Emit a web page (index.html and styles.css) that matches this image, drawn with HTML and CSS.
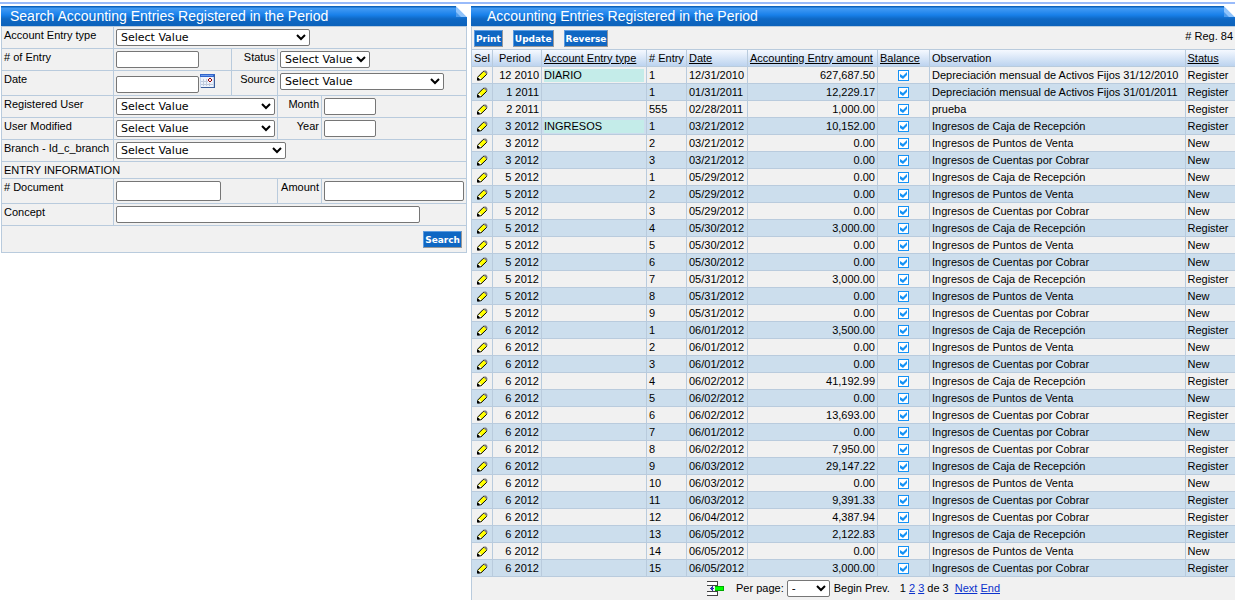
FILE: index.html
```
<!DOCTYPE html>
<html lang="en">
<head>
<meta charset="utf-8">
<title>Accounting Entries Registered in the Period</title>
<link rel="stylesheet" href="styles.css">
</head>
<body>
<svg width="0" height="0" class="defs" aria-hidden="true">
  <symbol id="pencil" viewBox="0 0 11 11">
    <path fill="#ff0" stroke="#000" d="M.8 9.8V7L6.2 1.5H7.5L9.5 3.5V4.5L4 9.8Z"/>
    <path fill="#fff" d="M1.3 9.3V7.2L2.2 6.6L4.2 8.4L3.6 9.3Z"/>
    <path fill="#000" d="M0 8h1.6l1 1v1.5H0z"/>
    <path fill="#808080" d="M6.5 .5H9L10.4 2V4H9.4L6.5 1.3Z"/>
  </symbol>
  <symbol id="fold" viewBox="0 0 11 11">
    <path fill="#fff" d="M0 0H11V11Z"/>
    <path fill="#8fc3fb" d="M0 0V11H11Z"/>
    <path fill="#4d9bec" d="M0 6L5 11H0Z"/>
    <path stroke="#dcebfd" d="M0 0L11 11"/>
  </symbol>
</svg>
<div class="top-line"></div>
<main class="layout">
  <form class="panel">
    <h1 class="title title-search">Search Accounting Entries Registered in the Period<svg class="fold" aria-hidden="true"><use href="#fold"/></svg></h1>
    <table class="search">
      <colgroup><col class="c-label"><col class="c-field"><col class="c-mid"><col class="c-side"><col class="c-end"></colgroup>
      <tr><td><label for="type">Account Entry type</label></td><td colspan="4"><select id="type" class="w-194"><option>Select Value</option></select></td></tr>
      <tr><td><label for="entry">&#35; of Entry</label></td><td><input type="text" id="entry" class="w-83"></td><td class="right"><label for="status">Status</label></td><td colspan="2"><select id="status" class="w-90"><option>Select Value</option></select></td></tr>
      <tr class="tall"><td><label for="date">Date</label></td><td><div class="date"><input type="text" id="date" class="w-83"><button type="button" class="calendar" aria-label="Choose date"><svg width="15" height="14" viewBox="0 0 15 14" shape-rendering="crispEdges"><path fill="#c5d4ec" d="M0 0h15v14H0z"/><path fill="#eef3fc" d="M1 3h12v10H1z"/><path fill="#3266cc" d="M0 0h15v3H0z"/><path fill="#6b9bee" d="M1 1h12v1H1z"/><path fill="#3c5f9c" d="M14 1h1v13H14zM1 13h14v1H1z"/><path fill="#c0cbdc" d="M3 5h1v7H3zM6 5h1v7H6zM9 9h1v3H9zM1 7h7v1H1zM1 10h12v1H1z"/><path fill="#900" d="M9 4h2v1H9zM8 5h1v2H8zM11 5h1v2H11zM9 7h2v1H9z"/></svg></button></div></td><td class="right"><label for="source">Source</label></td><td colspan="2"><select id="source" class="w-164"><option>Select Value</option></select></td></tr>
      <tr><td><label for="registered">Registered User</label></td><td colspan="2"><select id="registered" class="w-159"><option>Select Value</option></select></td><td class="right"><label for="month">Month</label></td><td><input type="text" id="month" class="w-52"></td></tr>
      <tr><td><label for="modified">User Modified</label></td><td colspan="2"><select id="modified" class="w-159"><option>Select Value</option></select></td><td class="right"><label for="year">Year</label></td><td><input type="text" id="year" class="w-52"></td></tr>
      <tr><td><label for="branch">Branch - Id_c_branch</label></td><td colspan="4"><select id="branch" class="w-170"><option>Select Value</option></select></td></tr>
      <tr class="section"><td colspan="5">ENTRY INFORMATION</td></tr>
      <tr class="tall"><td><label for="document">&#35; Document</label></td><td colspan="2"><input type="text" id="document" class="w-105 big"></td><td class="right"><label for="amount">Amount</label></td><td><input type="text" id="amount" class="w-140 big"></td></tr>
      <tr><td><label for="concept">Concept</label></td><td colspan="4"><input type="text" id="concept" class="w-304"></td></tr>
      <tr class="submit"><td colspan="5"><button type="submit" class="btn">Search</button></td></tr>
    </table>
  </form>
  <section class="panel">
    <h1 class="title title-results">Accounting Entries Registered in the Period<svg class="fold" aria-hidden="true"><use href="#fold"/></svg></h1>
    <div class="toolbar">
      <button type="button" class="btn">Print</button>
      <button type="button" class="btn">Update</button>
      <button type="button" class="btn">Reverse</button>
      <span class="count"># Reg. 84</span>
    </div>
    <table class="entries">
      <colgroup><col class="e-sel"><col class="e-period"><col class="e-type"><col class="e-num"><col class="e-date"><col class="e-amount"><col class="e-balance"><col><col class="e-status"></colgroup>
      <thead><tr><th>Sel</th><th>Period</th><th><a href="#">Account Entry type</a></th><th># Entry</th><th><a href="#">Date</a></th><th><a href="#">Accounting Entry amount</a></th><th><a href="#">Balance</a></th><th>Observation</th><th><a href="#">Status</a></th></tr></thead>
      <tbody>
      <tr><td><svg><use href="#pencil"/></svg></td><td>12 2010</td><td><span class="kind">DIARIO</span></td><td>1</td><td>12/31/2010</td><td>627,687.50</td><td><input type="checkbox" checked aria-label="Balance"></td><td>Depreciación mensual de Activos Fijos 31/12/2010</td><td>Register</td></tr>
      <tr><td><svg><use href="#pencil"/></svg></td><td>1 2011</td><td></td><td>1</td><td>01/31/2011</td><td>12,229.17</td><td><input type="checkbox" checked aria-label="Balance"></td><td>Depreciación mensual de Activos Fijos 31/01/2011</td><td>Register</td></tr>
      <tr><td><svg><use href="#pencil"/></svg></td><td>2 2011</td><td></td><td>555</td><td>02/28/2011</td><td>1,000.00</td><td><input type="checkbox" checked aria-label="Balance"></td><td>prueba</td><td>Register</td></tr>
      <tr><td><svg><use href="#pencil"/></svg></td><td>3 2012</td><td><span class="kind">INGRESOS</span></td><td>1</td><td>03/21/2012</td><td>10,152.00</td><td><input type="checkbox" checked aria-label="Balance"></td><td>Ingresos de Caja de Recepción</td><td>Register</td></tr>
      <tr><td><svg><use href="#pencil"/></svg></td><td>3 2012</td><td></td><td>2</td><td>03/21/2012</td><td>0.00</td><td><input type="checkbox" checked aria-label="Balance"></td><td>Ingresos de Puntos de Venta</td><td>New</td></tr>
      <tr><td><svg><use href="#pencil"/></svg></td><td>3 2012</td><td></td><td>3</td><td>03/21/2012</td><td>0.00</td><td><input type="checkbox" checked aria-label="Balance"></td><td>Ingresos de Cuentas por Cobrar</td><td>New</td></tr>
      <tr><td><svg><use href="#pencil"/></svg></td><td>5 2012</td><td></td><td>1</td><td>05/29/2012</td><td>0.00</td><td><input type="checkbox" checked aria-label="Balance"></td><td>Ingresos de Caja de Recepción</td><td>New</td></tr>
      <tr><td><svg><use href="#pencil"/></svg></td><td>5 2012</td><td></td><td>2</td><td>05/29/2012</td><td>0.00</td><td><input type="checkbox" checked aria-label="Balance"></td><td>Ingresos de Puntos de Venta</td><td>New</td></tr>
      <tr><td><svg><use href="#pencil"/></svg></td><td>5 2012</td><td></td><td>3</td><td>05/29/2012</td><td>0.00</td><td><input type="checkbox" checked aria-label="Balance"></td><td>Ingresos de Cuentas por Cobrar</td><td>New</td></tr>
      <tr><td><svg><use href="#pencil"/></svg></td><td>5 2012</td><td></td><td>4</td><td>05/30/2012</td><td>3,000.00</td><td><input type="checkbox" checked aria-label="Balance"></td><td>Ingresos de Caja de Recepción</td><td>Register</td></tr>
      <tr><td><svg><use href="#pencil"/></svg></td><td>5 2012</td><td></td><td>5</td><td>05/30/2012</td><td>0.00</td><td><input type="checkbox" checked aria-label="Balance"></td><td>Ingresos de Puntos de Venta</td><td>New</td></tr>
      <tr><td><svg><use href="#pencil"/></svg></td><td>5 2012</td><td></td><td>6</td><td>05/30/2012</td><td>0.00</td><td><input type="checkbox" checked aria-label="Balance"></td><td>Ingresos de Cuentas por Cobrar</td><td>New</td></tr>
      <tr><td><svg><use href="#pencil"/></svg></td><td>5 2012</td><td></td><td>7</td><td>05/31/2012</td><td>3,000.00</td><td><input type="checkbox" checked aria-label="Balance"></td><td>Ingresos de Caja de Recepción</td><td>Register</td></tr>
      <tr><td><svg><use href="#pencil"/></svg></td><td>5 2012</td><td></td><td>8</td><td>05/31/2012</td><td>0.00</td><td><input type="checkbox" checked aria-label="Balance"></td><td>Ingresos de Puntos de Venta</td><td>New</td></tr>
      <tr><td><svg><use href="#pencil"/></svg></td><td>5 2012</td><td></td><td>9</td><td>05/31/2012</td><td>0.00</td><td><input type="checkbox" checked aria-label="Balance"></td><td>Ingresos de Cuentas por Cobrar</td><td>New</td></tr>
      <tr><td><svg><use href="#pencil"/></svg></td><td>6 2012</td><td></td><td>1</td><td>06/01/2012</td><td>3,500.00</td><td><input type="checkbox" checked aria-label="Balance"></td><td>Ingresos de Caja de Recepción</td><td>Register</td></tr>
      <tr><td><svg><use href="#pencil"/></svg></td><td>6 2012</td><td></td><td>2</td><td>06/01/2012</td><td>0.00</td><td><input type="checkbox" checked aria-label="Balance"></td><td>Ingresos de Puntos de Venta</td><td>New</td></tr>
      <tr><td><svg><use href="#pencil"/></svg></td><td>6 2012</td><td></td><td>3</td><td>06/01/2012</td><td>0.00</td><td><input type="checkbox" checked aria-label="Balance"></td><td>Ingresos de Cuentas por Cobrar</td><td>New</td></tr>
      <tr><td><svg><use href="#pencil"/></svg></td><td>6 2012</td><td></td><td>4</td><td>06/02/2012</td><td>41,192.99</td><td><input type="checkbox" checked aria-label="Balance"></td><td>Ingresos de Caja de Recepción</td><td>Register</td></tr>
      <tr><td><svg><use href="#pencil"/></svg></td><td>6 2012</td><td></td><td>5</td><td>06/02/2012</td><td>0.00</td><td><input type="checkbox" checked aria-label="Balance"></td><td>Ingresos de Puntos de Venta</td><td>New</td></tr>
      <tr><td><svg><use href="#pencil"/></svg></td><td>6 2012</td><td></td><td>6</td><td>06/02/2012</td><td>13,693.00</td><td><input type="checkbox" checked aria-label="Balance"></td><td>Ingresos de Cuentas por Cobrar</td><td>Register</td></tr>
      <tr><td><svg><use href="#pencil"/></svg></td><td>6 2012</td><td></td><td>7</td><td>06/01/2012</td><td>0.00</td><td><input type="checkbox" checked aria-label="Balance"></td><td>Ingresos de Cuentas por Cobrar</td><td>New</td></tr>
      <tr><td><svg><use href="#pencil"/></svg></td><td>6 2012</td><td></td><td>8</td><td>06/02/2012</td><td>7,950.00</td><td><input type="checkbox" checked aria-label="Balance"></td><td>Ingresos de Cuentas por Cobrar</td><td>Register</td></tr>
      <tr><td><svg><use href="#pencil"/></svg></td><td>6 2012</td><td></td><td>9</td><td>06/03/2012</td><td>29,147.22</td><td><input type="checkbox" checked aria-label="Balance"></td><td>Ingresos de Caja de Recepción</td><td>Register</td></tr>
      <tr><td><svg><use href="#pencil"/></svg></td><td>6 2012</td><td></td><td>10</td><td>06/03/2012</td><td>0.00</td><td><input type="checkbox" checked aria-label="Balance"></td><td>Ingresos de Puntos de Venta</td><td>New</td></tr>
      <tr><td><svg><use href="#pencil"/></svg></td><td>6 2012</td><td></td><td>11</td><td>06/03/2012</td><td>9,391.33</td><td><input type="checkbox" checked aria-label="Balance"></td><td>Ingresos de Cuentas por Cobrar</td><td>Register</td></tr>
      <tr><td><svg><use href="#pencil"/></svg></td><td>6 2012</td><td></td><td>12</td><td>06/04/2012</td><td>4,387.94</td><td><input type="checkbox" checked aria-label="Balance"></td><td>Ingresos de Cuentas por Cobrar</td><td>Register</td></tr>
      <tr><td><svg><use href="#pencil"/></svg></td><td>6 2012</td><td></td><td>13</td><td>06/05/2012</td><td>2,122.83</td><td><input type="checkbox" checked aria-label="Balance"></td><td>Ingresos de Caja de Recepción</td><td>Register</td></tr>
      <tr><td><svg><use href="#pencil"/></svg></td><td>6 2012</td><td></td><td>14</td><td>06/05/2012</td><td>0.00</td><td><input type="checkbox" checked aria-label="Balance"></td><td>Ingresos de Puntos de Venta</td><td>New</td></tr>
      <tr><td><svg><use href="#pencil"/></svg></td><td>6 2012</td><td></td><td>15</td><td>06/05/2012</td><td>3,000.00</td><td><input type="checkbox" checked aria-label="Balance"></td><td>Ingresos de Cuentas por Cobrar</td><td>Register</td></tr>
      </tbody>
    </table>
    <nav class="pager">
      <svg width="17" height="15" viewBox="0 0 17 15" shape-rendering="crispEdges" aria-hidden="true"><path fill="#fff" d="M1 1h9v3H1zM1 11h9v3H1z"/><path fill="#444" d="M0 0h11v1H0zM10 1h1v3H10zM0 4h11v1H0zM0 10h11v1H0zM10 11h1v3H10zM0 14h11v1H0z"/><path fill="#33a" d="M3 7h4v1H3zM4 6h1v3H4zM5 5h1v5H5z"/><path fill="#0a0" d="M8 5h9v5H8z"/><path fill="#0f0" d="M8 6h8v3H8z"/></svg>
      <label for="perpage">Per page:</label>
      <select id="perpage" class="w-43"><option>-</option></select>
      <span class="prev">Begin Prev.</span>
      <span>1 <a href="#">2</a> <a href="#">3</a> de 3</span>
      <span class="next"><a href="#">Next</a> <a href="#">End</a></span>
    </nav>
  </section>
</main>
</body>
</html>
```
FILE: styles.css
```
* { box-sizing: border-box; }
body {
  margin: 0;
  padding-top: 2px;
  background: #fff;
  color: #000;
  font: 11px/13px "Liberation Sans", Arial, sans-serif;
}
.defs { position: absolute; }
.top-line { height: 2px; background: #99bbfa; }
.layout {
  display: grid;
  grid-template-columns: auto 1fr;
  gap: 4px;
  align-items: start;
  padding: 2px 0 0 1px;
}
.title {
  position: relative;
  height: 20px;
  margin: 0;
  font-size: 14px;
  font-weight: normal;
  line-height: 20px;
  color: #fff;
  white-space: nowrap;
  background: linear-gradient(#0c62bb 0, #0c62bb 1px, #459cf5 2px, #1880ea 9px, #0f68c4 13px, #0c62bb 20px);
}
.title-search { padding-left: 9px; }
.title-results { padding-left: 16px; }
.fold { position: absolute; top: 0; right: 0; width: 11px; height: 11px; }

select, input[type="text"] {
  height: 17px;
  margin: 0;
  padding: 0;
  border: 1px solid #767676;
  border-radius: 2px;
  background-color: #fff;
  color: #000;
  font: 11px "DejaVu Sans", Verdana, sans-serif;
  vertical-align: top;
}
input[type="text"].big { height: 20px; }
.w-43 { width: 43px; }
.w-52 { width: 52px; }
.w-83 { width: 83px; }
.w-90 { width: 90px; }
.w-105 { width: 105px; }
.w-140 { width: 140px; }
.w-159 { width: 159px; }
.w-164 { width: 164px; }
.w-170 { width: 170px; }
.w-194 { width: 194px; }
.w-304 { width: 304px; }

.btn {
  height: 17px;
  padding: 0 1px;
  border: 1px solid;
  border-color: #5b9be0 #999 #999 #5b9be0;
  background: #0f67c3;
  color: #fff;
  font: bold 9px/14px "DejaVu Sans", Verdana, sans-serif;
}

table { border-collapse: collapse; }
.search { table-layout: fixed; width: 466px; background: #f1f1f1; }
.c-label { width: 112px; }
.c-field { width: 118px; }
.c-mid { width: 46px; }
.c-side { width: 44px; }
.search tr { height: 22px; }
.search tr.tall { height: 25px; }
.search tr.section { height: 17px; }
.search tr.submit { height: 27px; }
.search td { padding: 2px; border: 1px solid #b9cbdd; vertical-align: top; white-space: nowrap; }
.search label { display: block; }
.right { text-align: right; }
.section td { padding-bottom: 0; }
.date { display: flex; gap: 1px; align-items: flex-end; }
.date input { margin-top: 3px; }
.calendar { align-self: flex-start; height: 14px; margin-top: 1px; padding: 0; border: 0; background: none; }
.calendar svg { display: block; }
.search .submit td { padding: 5px 4px 0 0; text-align: right; }

.toolbar {
  display: flex;
  gap: 10px;
  height: 23px;
  padding: 3px 2px 0;
  border: solid #b9cbdd;
  border-width: 1px 0 0 1px;
  background: #f1f1f1;
}
.count { margin-left: auto; }
.entries { table-layout: fixed; width: 100%; background: #f1f1f1; }
.e-sel { width: 21px; }
.e-period { width: 49px; }
.e-type { width: 105px; }
.e-num { width: 40px; }
.e-date { width: 61px; }
.e-amount { width: 130px; }
.e-balance { width: 52px; }
.e-status { width: 50px; }
.entries tr { height: 17px; }
.entries th, .entries td {
  padding: 1px 2px;
  border: 1px solid #b9cbdd;
  border-right-width: 0;
  text-align: left;
  white-space: nowrap;
}
.entries th { font-weight: normal; }
.entries thead tr { background: linear-gradient(#f5f9ff, #b9d1ee); }
.entries th a { color: #000; }
.entries tbody tr:nth-child(even) { background: #ccdeed; }
.entries th:nth-child(2) { padding-left: 6px; }
.entries td:nth-child(2), .entries td:nth-child(6) { text-align: right; }
.entries td:nth-child(7) { text-align: center; }
.entries svg { display: block; width: 11px; height: 11px; margin-left: 3px; }
.kind { display: block; background: #c4ece9; }
.entries input {
  appearance: none;
  display: block;
  width: 11px;
  height: 11px;
  margin: 1px auto 0;
  border: 1px solid #1592f5;
  background: #fff;
}
.entries input:checked::before {
  content: "";
  display: block;
  height: 9px;
  background: #1592f5;
  clip-path: polygon(1px 3px, 4px 5px, 8px 1px, 8px 4px, 4px 8px, 1px 6px);
}

.pager {
  display: flex;
  justify-content: center;
  align-items: center;
  min-height: 23px;
  border-left: 1px solid #b9cbdd;
  background: #f1f1f1;
}
.pager label { margin: 0 3px 0 12px; }
.pager select { margin-right: 4px; }
.prev { margin-right: 10px; }
.next { margin-left: 6px; }
.pager a { color: #0b32cc; }
```
